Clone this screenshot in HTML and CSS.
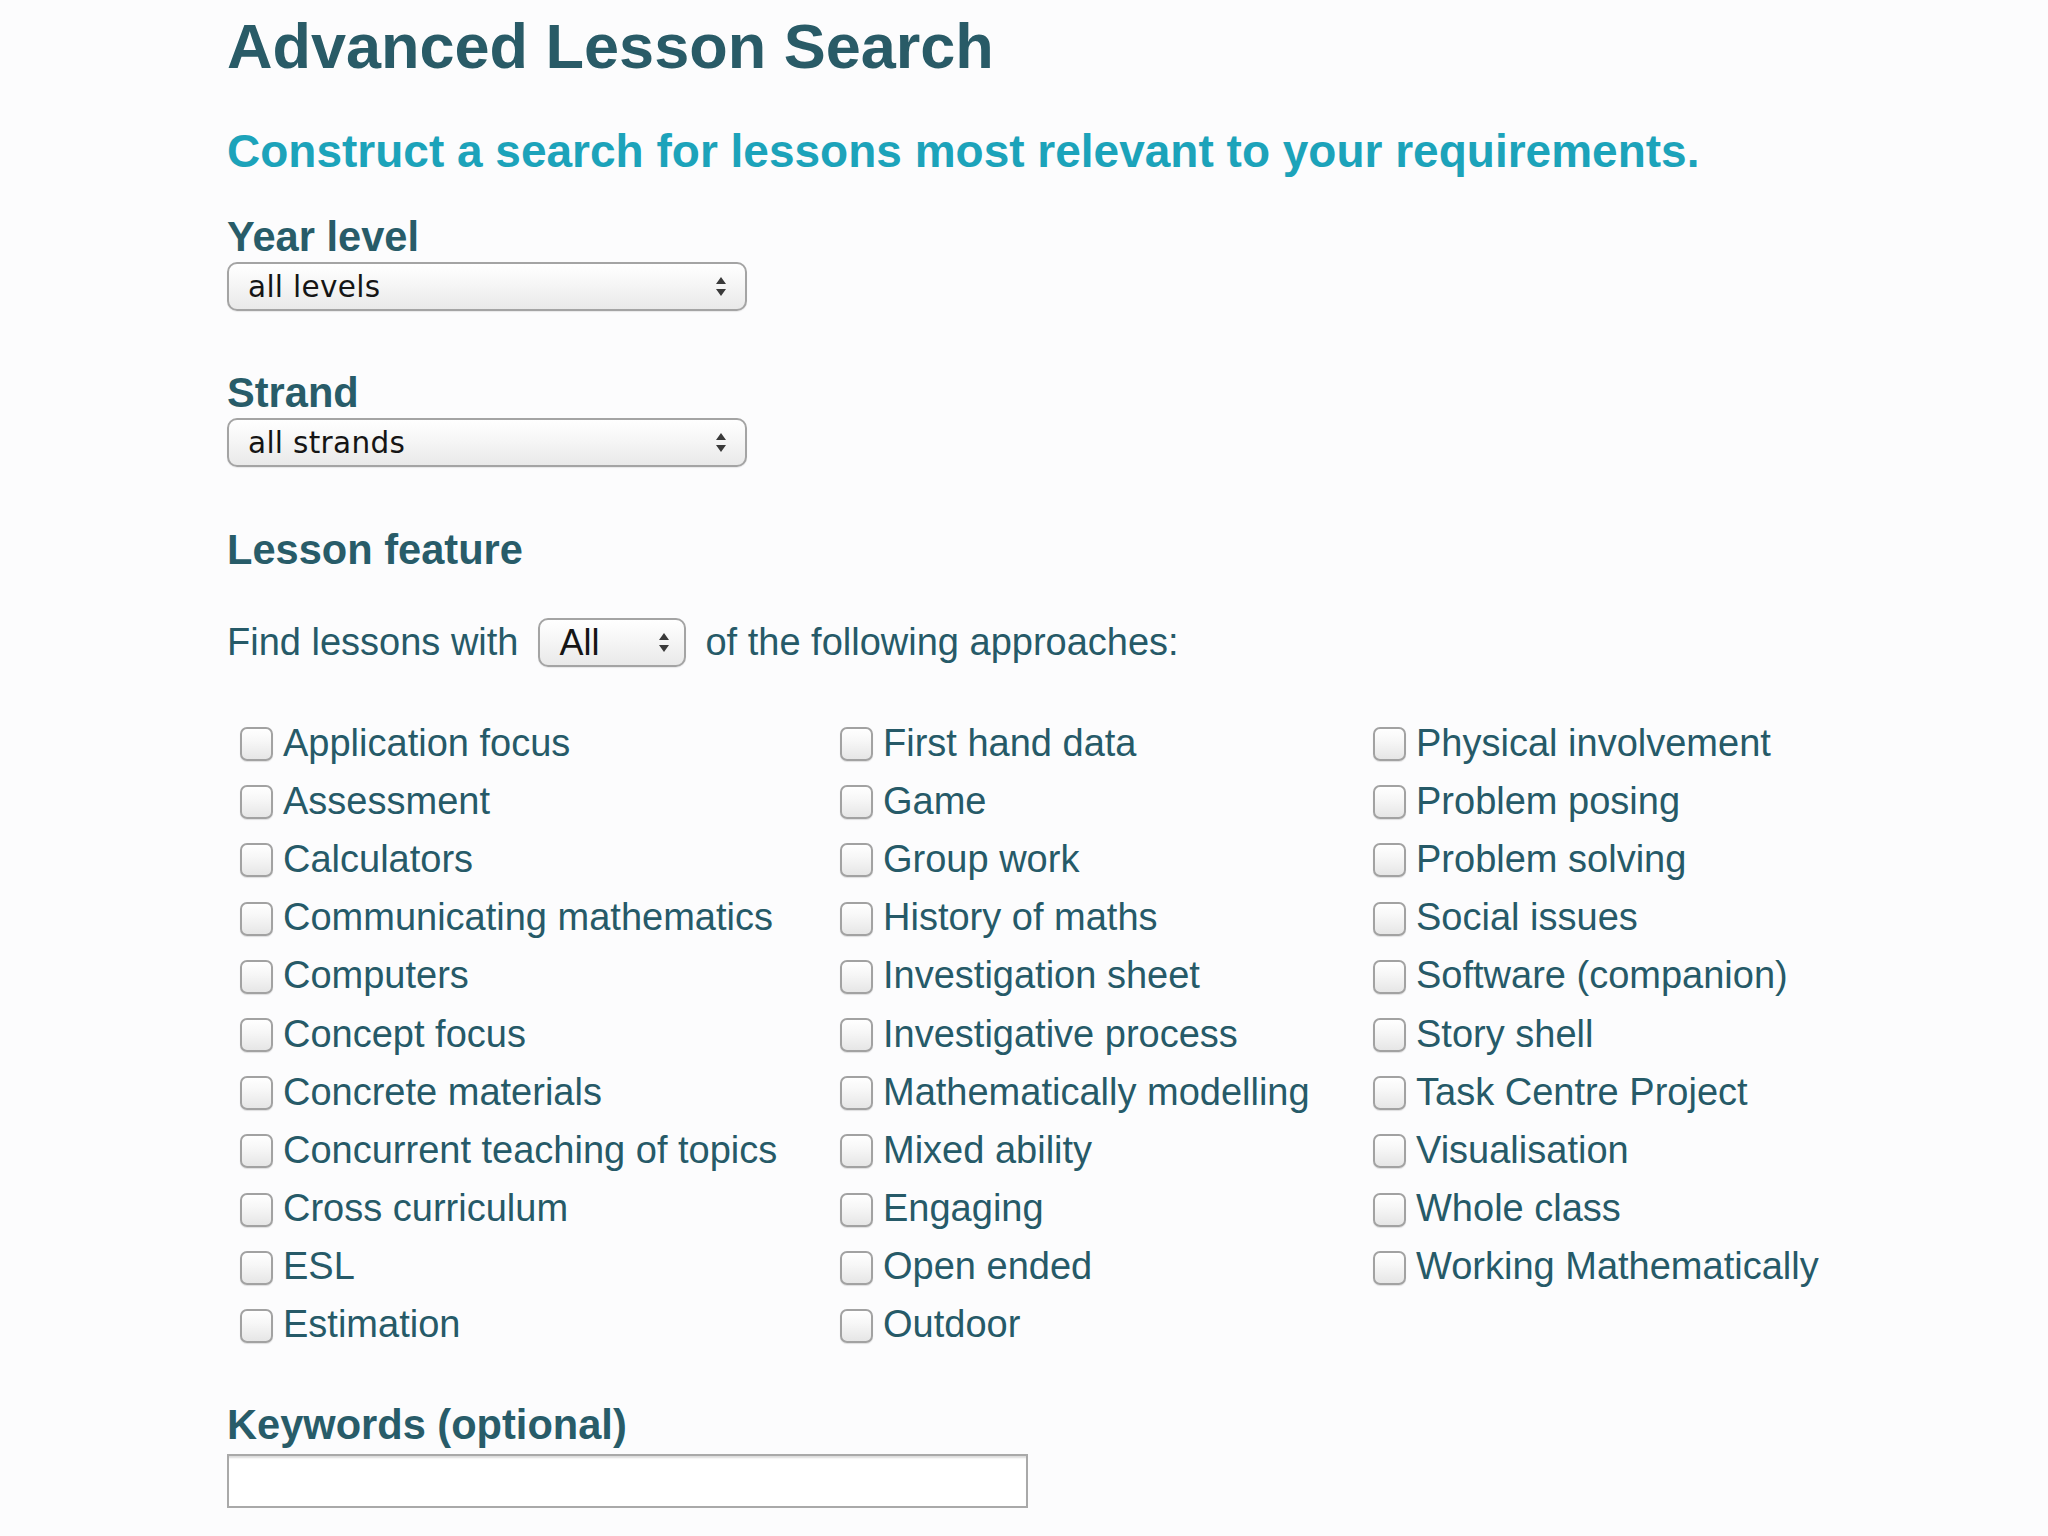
FILE: index.html
```html
<!DOCTYPE html>
<html lang="en">
<head>
<meta charset="utf-8">
<title>Advanced Lesson Search</title>
<link rel="stylesheet" href="styles.css">
</head>
<body>
<main class="page">
  <h1 class="title">Advanced Lesson Search</h1>
  <h2 class="subtitle">Construct a search for lessons most relevant to your requirements.</h2>

  <div class="field first">
    <label class="label">Year level</label>
    <div class="select wide">
      <span class="select-text">all levels</span>
      <svg class="arrows" width="12" height="19" viewBox="0 0 12 19"><path d="M6 0 L11 7 L1 7 Z M1 12 L11 12 L6 19 Z" fill="#3a3a3a"/></svg>
    </div>
  </div>

  <div class="field">
    <label class="label">Strand</label>
    <div class="select wide">
      <span class="select-text">all strands</span>
      <svg class="arrows" width="12" height="19" viewBox="0 0 12 19"><path d="M6 0 L11 7 L1 7 Z M1 12 L11 12 L6 19 Z" fill="#3a3a3a"/></svg>
    </div>
  </div>

  <h3 class="label section">Lesson feature</h3>

  <div class="find-row">
    <span>Find lessons with</span>
    <div class="select small">
      <span class="select-all">All</span>
      <svg class="arrows" width="12" height="19" viewBox="0 0 12 19"><path d="M6 0 L11 7 L1 7 Z M1 12 L11 12 L6 19 Z" fill="#3a3a3a"/></svg>
    </div>
    <span>of the following approaches:</span>
  </div>

  <div class="grid">
    <label class="opt"><input type="checkbox"><span>Application focus</span></label>
    <label class="opt"><input type="checkbox"><span>First hand data</span></label>
    <label class="opt"><input type="checkbox"><span>Physical involvement</span></label>

    <label class="opt"><input type="checkbox"><span>Assessment</span></label>
    <label class="opt"><input type="checkbox"><span>Game</span></label>
    <label class="opt"><input type="checkbox"><span>Problem posing</span></label>

    <label class="opt"><input type="checkbox"><span>Calculators</span></label>
    <label class="opt"><input type="checkbox"><span>Group work</span></label>
    <label class="opt"><input type="checkbox"><span>Problem solving</span></label>

    <label class="opt"><input type="checkbox"><span>Communicating mathematics</span></label>
    <label class="opt"><input type="checkbox"><span>History of maths</span></label>
    <label class="opt"><input type="checkbox"><span>Social issues</span></label>

    <label class="opt"><input type="checkbox"><span>Computers</span></label>
    <label class="opt"><input type="checkbox"><span>Investigation sheet</span></label>
    <label class="opt"><input type="checkbox"><span>Software (companion)</span></label>

    <label class="opt"><input type="checkbox"><span>Concept focus</span></label>
    <label class="opt"><input type="checkbox"><span>Investigative process</span></label>
    <label class="opt"><input type="checkbox"><span>Story shell</span></label>

    <label class="opt"><input type="checkbox"><span>Concrete materials</span></label>
    <label class="opt"><input type="checkbox"><span>Mathematically modelling</span></label>
    <label class="opt"><input type="checkbox"><span>Task Centre Project</span></label>

    <label class="opt"><input type="checkbox"><span>Concurrent teaching of topics</span></label>
    <label class="opt"><input type="checkbox"><span>Mixed ability</span></label>
    <label class="opt"><input type="checkbox"><span>Visualisation</span></label>

    <label class="opt"><input type="checkbox"><span>Cross curriculum</span></label>
    <label class="opt"><input type="checkbox"><span>Engaging</span></label>
    <label class="opt"><input type="checkbox"><span>Whole class</span></label>

    <label class="opt"><input type="checkbox"><span>ESL</span></label>
    <label class="opt"><input type="checkbox"><span>Open ended</span></label>
    <label class="opt"><input type="checkbox"><span>Working Mathematically</span></label>

    <label class="opt"><input type="checkbox"><span>Estimation</span></label>
    <label class="opt"><input type="checkbox"><span>Outdoor</span></label>
  </div>

  <div class="field keywords">
    <label class="label">Keywords (optional)</label>
    <input class="text-input" type="text">
  </div>
</main>
</body>
</html>
```

FILE: styles.css
```css
html, body {
  margin: 0;
  padding: 0;
  background: #fcfcfd;
}

body {
  font-family: "Liberation Sans", Arial, Helvetica, sans-serif;
  color: #265a68;
}

.page {
  margin-left: 227px;
  padding-top: 6px;
  width: 1700px;
}

.title {
  margin: 0;
  font-size: 63px;
  line-height: 80px;
  font-weight: bold;
  color: #295b67;
}

.subtitle {
  margin: 35px 0 0 0;
  font-size: 46px;
  line-height: 60px;
  font-weight: bold;
  color: #1ca3ba;
}

.field {
  margin-top: 58px;
}

.field.first {
  margin-top: 32px;
}

.label {
  display: block;
  margin: 0;
  font-size: 41.6px;
  line-height: 48px;
  font-weight: bold;
  color: #285c69;
}

.section {
  margin-top: 59px;
}

.select {
  box-sizing: border-box;
  height: 49px;
  margin-top: 1px;
  display: flex;
  align-items: center;
  justify-content: space-between;
  border: 2px solid #a4a4a4;
  border-radius: 10px;
  background: linear-gradient(#ffffff 0%, #f6f6f6 45%, #e9e9e9 100%);
  box-shadow: 0 1px 1px rgba(0, 0, 0, 0.08);
}

.select.wide {
  width: 520px;
  padding: 0 18px 0 19px;
}

.select.small {
  width: 148px;
  padding: 0 14px 0 19px;
  margin: 0 19px 0 20px;
}

.select-text {
  font-family: "DejaVu Sans", "Liberation Sans", sans-serif;
  font-size: 29.5px;
  color: #151515;
  letter-spacing: 0.3px;
}

.select-all {
  font-family: "Liberation Sans", Arial, sans-serif;
  font-size: 36px;
  color: #151515;
}

.arrows {
  display: block;
  flex: none;
}

.find-row {
  margin-top: 44px;
  height: 49px;
  display: flex;
  align-items: center;
  font-size: 38px;
  color: #265a68;
}

.grid {
  margin-top: 47px;
  display: grid;
  grid-template-columns: 600px 533px auto;
  grid-auto-rows: 58.2px;
}

.opt {
  display: flex;
  align-items: center;
  padding-left: 13px;
  font-size: 38px;
  color: #265a68;
  white-space: nowrap;
}

.opt input {
  appearance: none;
  -webkit-appearance: none;
  box-sizing: border-box;
  width: 33px;
  height: 34px;
  margin: 2px 10px 0 0;
  flex: none;
  border: 2px solid #a2a2a2;
  border-radius: 7px;
  background: linear-gradient(#ffffff 0%, #f7f7f7 40%, #e6e6e6 100%);
  box-shadow: 0 1px 1px rgba(0, 0, 0, 0.12);
}

.keywords {
  margin-top: 47px;
}

.text-input {
  display: block;
  box-sizing: border-box;
  width: 801px;
  height: 54px;
  margin-top: 5px;
  border: 2px solid #a9a9a9;
  border-radius: 0;
  background: #ffffff;
  box-shadow: inset 0 3px 2px -1px #dcdcdc;
  outline: none;
}
```
